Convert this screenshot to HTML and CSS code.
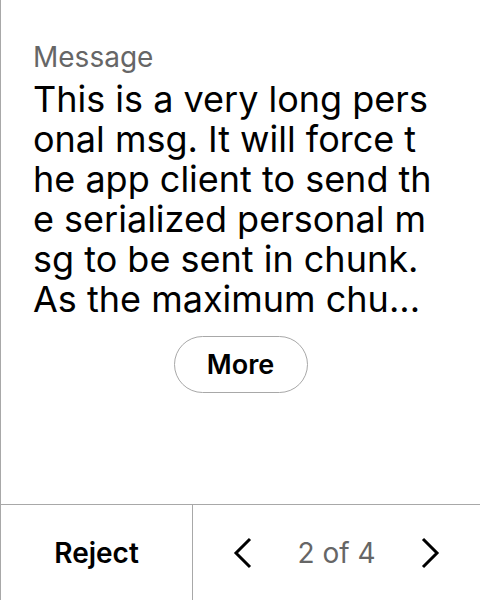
FILE: index.html
```html
<!DOCTYPE html>
<html>
<head>
<meta charset="utf-8">
<link rel="stylesheet" href="styles.css">
</head>
<body>
<div class="screen">
  <main class="content">
    <div class="label">Message</div>
    <div class="msg">
      <div class="line">This is a very long pers</div>
      <div class="line">onal msg. It will force t</div>
      <div class="line">he app client to send th</div>
      <div class="line">e serialized personal m</div>
      <div class="line">sg to be sent in chunk.</div>
      <div class="line">As the maximum chu...</div>
    </div>
    <div class="more-wrap"><button class="more">More</button></div>
  </main>
  <footer class="footer">
    <div class="reject">Reject</div>
    <div class="pager">
      <svg class="chev" width="20" height="32" viewBox="0 0 20 32"><path d="M17 2 L3 16 L17 30" fill="none" stroke="#000" stroke-width="3"/></svg>
      <span class="count">2 of 4</span>
      <svg class="chev" width="20" height="32" viewBox="0 0 20 32"><path d="M3 2 L17 16 L3 30" fill="none" stroke="#000" stroke-width="3"/></svg>
    </div>
  </footer>
</div>
</body>
</html>
```

FILE: styles.css
```css
html, body {
  margin: 0;
  padding: 0;
  background: #fff;
}
body {
  font-family: Inter, "Noto Sans", sans-serif;
  color: #000;
}
.screen {
  width: 479px;
  height: 600px;
  border-left: 1px solid #a8a8a8;
  display: flex;
  flex-direction: column;
}
.content {
  flex: 1;
  padding: 41px 0 0 32px;
}
.label {
  font-size: 28px;
  line-height: 32px;
  color: #666;
}
.msg {
  margin-top: 6px;
  font-size: 36px;
  line-height: 40px;
  white-space: nowrap;
}
.more-wrap {
  display: flex;
  justify-content: center;
  padding-right: 32px;
  margin-top: 17px;
}
.more {
  width: 134px;
  height: 57px;
  border: 1.5px solid #a8a8a8;
  border-radius: 29px;
  background: #fff;
  font-family: Inter, "Noto Sans", sans-serif;
  font-size: 27px;
  font-weight: 600;
  color: #000;
  padding: 0;
}
.footer {
  height: 95px;
  border-top: 1px solid #a8a8a8;
  display: flex;
}
.reject {
  width: 191px;
  border-right: 1px solid #a8a8a8;
  display: flex;
  align-items: center;
  justify-content: center;
  font-size: 28px;
  font-weight: 600;
}
.pager {
  flex: 1;
  display: flex;
  align-items: center;
  justify-content: center;
  gap: 44px;
}
.count {
  font-size: 28px;
  color: #666;
}
.chev {
  display: block;
}
```
